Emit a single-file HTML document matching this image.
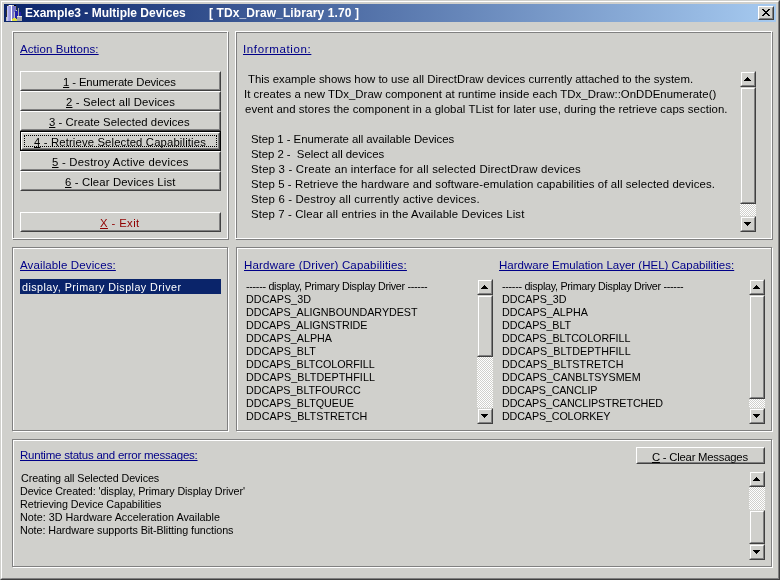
<!DOCTYPE html><html><head><meta charset="utf-8"><style>
html,body{margin:0;padding:0;}
body{will-change:transform;width:780px;height:580px;overflow:hidden;position:relative;background:#d0d0cc;font-family:"Liberation Sans",sans-serif;}
div,svg{position:absolute;box-sizing:border-box;}
.pb{border:1px solid;background:#d0d0cc;}
.in{position:absolute;left:0;top:0;right:0;bottom:0;border:1px solid;}
.btxt{font-size:11.3px;white-space:pre;line-height:20px;color:#000;}
.lbl{color:#000088;font-size:11.5px;white-space:pre;text-decoration:underline;text-decoration-skip-ink:none;line-height:14px;}
.info{font-size:11.4px;white-space:pre;line-height:15px;color:#000;}
.lst{font-size:10.75px;white-space:pre;line-height:13px;color:#000;}
u{text-decoration:underline;text-decoration-skip-ink:none;}
</style></head><body>

<div style="left:0px;top:0px;width:780px;height:580px;border-top:1px solid #d0d0cc;border-left:1px solid #d0d0cc;border-right:1px solid #404040;border-bottom:1px solid #404040"></div>
<div style="left:1px;top:1px;width:778px;height:578px;border-top:1px solid #fff;border-left:1px solid #fff;border-right:1px solid #808080;border-bottom:1px solid #808080"></div>
<div style="left:4px;top:4px;width:772px;height:18px;background:linear-gradient(to right,#0a246a,#a6caf0)"></div>
<svg style="left:6px;top:5px" width="16" height="16" shape-rendering="crispEdges"><path d="M1 0h1v1h-1zM10 1h1v1h-1zM10 2h1v1h-1zM10 3h1v1h-1zM10 4h1v1h-1zM0 5h1v1h-1zM0 6h1v1h-1zM0 7h1v1h-1zM0 8h1v1h-1zM0 9h1v1h-1zM0 10h1v1h-1zM0 11h1v1h-1z" fill="#303030"/><path d="M2 0h1v1h-1z" fill="#808080"/><path d="M3 0h3v1h-3zM5 1h1v1h-1zM5 2h1v1h-1zM5 3h1v1h-1zM5 4h1v1h-1zM5 5h1v1h-1zM5 6h1v1h-1zM5 7h1v1h-1zM5 8h1v1h-1zM5 9h1v1h-1zM5 10h1v1h-1zM5 11h1v1h-1zM5 12h1v1h-1zM5 13h1v1h-1zM5 14h1v1h-1zM5 15h1v1h-1z" fill="#ffffff"/><path d="M6 0h2v1h-2zM10 5h1v1h-1zM8 7h1v1h-1zM8 8h1v1h-1zM8 9h1v1h-1zM8 10h1v1h-1zM8 11h1v1h-1zM0 12h1v1h-1zM8 12h1v1h-1zM0 13h1v1h-1zM0 14h1v1h-1zM0 15h1v1h-1z" fill="#c0c0c0"/><path d="M8 0h2v1h-2z" fill="#000000"/><path d="M1 1h1v1h-1zM1 2h1v1h-1zM1 3h1v1h-1zM1 4h1v1h-1zM1 5h1v1h-1zM1 6h1v1h-1zM1 7h1v1h-1zM1 8h1v1h-1zM1 9h1v1h-1zM1 10h1v1h-1zM1 11h1v1h-1zM1 12h1v1h-1zM1 13h1v1h-1zM1 14h1v1h-1zM1 15h1v1h-1z" fill="#c8c8f0"/><path d="M2 1h1v1h-1zM2 2h1v1h-1zM2 3h1v1h-1zM2 4h1v1h-1zM2 5h1v1h-1zM2 6h1v1h-1zM2 7h1v1h-1zM2 8h1v1h-1zM2 9h1v1h-1zM2 10h1v1h-1zM2 11h1v1h-1zM2 12h1v1h-1zM2 13h1v1h-1zM2 14h1v1h-1zM2 15h1v1h-1z" fill="#a8a8f0"/><path d="M3 1h2v1h-2zM3 2h2v1h-2zM3 3h2v1h-2zM3 4h2v1h-2zM3 5h2v1h-2zM3 6h2v1h-2zM3 7h2v1h-2zM3 8h2v1h-2zM3 9h2v1h-2zM3 10h2v1h-2zM3 11h2v1h-2zM3 12h2v1h-2zM3 13h2v1h-2zM3 14h2v1h-2zM3 15h2v1h-2z" fill="#9c9ce0"/><path d="M6 1h4v1h-4zM6 2h4v1h-4zM6 3h4v1h-4zM6 4h4v1h-4zM6 5h4v1h-4zM6 6h3v1h-3zM6 7h2v1h-2zM6 8h2v1h-2zM6 9h2v1h-2zM6 10h2v1h-2zM6 11h2v1h-2zM6 12h2v1h-2zM6 13h1v1h-1z" fill="#7474c8"/><path d="M12 3h1v1h-1zM12 4h1v1h-1zM12 5h1v1h-1zM12 6h1v1h-1zM12 7h1v1h-1zM12 8h1v1h-1zM12 9h1v1h-1zM12 10h1v1h-1zM11 12h5v1h-5zM11 13h5v1h-5zM11 14h5v1h-5zM11 15h5v1h-5z" fill="#a8a8a8"/><path d="M9 6h3v1h-3zM9 7h3v1h-3zM13 7h2v1h-2zM9 8h3v1h-3zM13 8h2v1h-2zM9 9h3v1h-3zM13 9h2v1h-2zM9 10h3v1h-3zM13 10h2v1h-2zM9 11h2v1h-2zM9 12h2v1h-2zM10 13h1v1h-1z" fill="#2020a8"/><path d="M11 11h5v1h-5z" fill="#e0e0e0"/><path d="M7 13h3v1h-3zM6 14h5v1h-5zM6 15h5v1h-5z" fill="#e0e040"/></svg>
<div style="left:25px;top:5px;font-size:12px;font-weight:bold;color:#fff;white-space:pre;line-height:16px">Example3 - Multiple Devices</div>
<div style="left:209px;top:5px;font-size:12px;font-weight:bold;color:#fff;white-space:pre;line-height:16px;letter-spacing:0.11px">[ TDx_Draw_Library 1.70 ]</div>
<div class="pb" style="left:758px;top:6px;width:16px;height:14px;background:#d0d0cc;border-color:#fff #404040 #404040 #fff"><div class="in" style="border-color:#d0d0cc #808080 #808080 #d0d0cc"></div></div>
<svg style="left:762px;top:9px" width="8" height="7" shape-rendering="crispEdges"><path d="M0 0h1v1h-1zM1 0h1v1h-1zM6 0h1v1h-1zM7 0h1v1h-1zM1 1h1v1h-1zM2 1h1v1h-1zM5 1h1v1h-1zM6 1h1v1h-1zM2 2h1v1h-1zM3 2h1v1h-1zM4 2h1v1h-1zM5 2h1v1h-1zM3 3h1v1h-1zM4 3h1v1h-1zM2 4h1v1h-1zM3 4h1v1h-1zM4 4h1v1h-1zM5 4h1v1h-1zM1 5h1v1h-1zM2 5h1v1h-1zM5 5h1v1h-1zM6 5h1v1h-1zM0 6h1v1h-1zM1 6h1v1h-1zM6 6h1v1h-1zM7 6h1v1h-1z" fill="#000"/></svg>
<div style="left:13px;top:32px;width:216px;height:208px;border:1px solid #808080"></div>
<div style="left:12px;top:31px;width:216px;height:208px;border:1px solid #fff"></div>
<div style="left:236px;top:32px;width:537px;height:208px;border:1px solid #808080"></div>
<div style="left:235px;top:31px;width:537px;height:208px;border:1px solid #fff"></div>
<div style="left:13px;top:248px;width:216px;height:184px;border:1px solid #fff"></div>
<div style="left:12px;top:247px;width:216px;height:184px;border:1px solid #808080"></div>
<div style="left:237px;top:248px;width:536px;height:184px;border:1px solid #fff"></div>
<div style="left:236px;top:247px;width:536px;height:184px;border:1px solid #808080"></div>
<div style="left:13px;top:440px;width:760px;height:128px;border:1px solid #fff"></div>
<div style="left:12px;top:439px;width:760px;height:128px;border:1px solid #808080"></div>
<div class="pb" style="left:20px;top:71px;width:201px;height:20px;border-color:#fff #404040 #404040 #fff"><div class="in" style="border-color:#d0d0cc #808080 #808080 #d0d0cc"></div></div>
<div class="pb" style="left:20px;top:91px;width:201px;height:20px;border-color:#fff #404040 #404040 #fff"><div class="in" style="border-color:#d0d0cc #808080 #808080 #d0d0cc"></div></div>
<div class="pb" style="left:20px;top:111px;width:201px;height:20px;border-color:#fff #404040 #404040 #fff"><div class="in" style="border-color:#d0d0cc #808080 #808080 #d0d0cc"></div></div>
<div class="pb" style="left:20px;top:131px;width:201px;height:20px;border:1px solid #000"><div class="in" style="border-color:#fff #404040 #404040 #fff"><div class="in" style="border-color:#d0d0cc #808080 #808080 #d0d0cc"></div></div></div>
<div style="left:24px;top:135px;width:193px;height:12px;border:1px dotted #000"></div>
<div class="pb" style="left:20px;top:151px;width:201px;height:20px;border-color:#fff #404040 #404040 #fff"><div class="in" style="border-color:#d0d0cc #808080 #808080 #d0d0cc"></div></div>
<div class="pb" style="left:20px;top:171px;width:201px;height:20px;border-color:#fff #404040 #404040 #fff"><div class="in" style="border-color:#d0d0cc #808080 #808080 #d0d0cc"></div></div>
<div class="pb" style="left:20px;top:212px;width:201px;height:20px;border-color:#fff #404040 #404040 #fff"><div class="in" style="border-color:#d0d0cc #808080 #808080 #d0d0cc"></div></div>
<div style="left:740px;top:87px;width:16px;height:129px;background:repeating-conic-gradient(#fff 0 25%,#d0d0cc 0 50%) 0 0/2px 2px"></div>
<div class="pb" style="left:740px;top:71px;width:16px;height:16px;border-color:#d0d0cc #404040 #404040 #d0d0cc"><div class="in" style="border-color:#fff #808080 #808080 #fff"></div></div>
<svg style="left:744px;top:77px" width="7" height="4"><path d="M3 0h1v1h1v1h1v1h1v1H0V3h1V2h1V1h1z" fill="#000"/></svg>
<div class="pb" style="left:740px;top:87px;width:16px;height:117px;border-color:#d0d0cc #404040 #404040 #d0d0cc"><div class="in" style="border-color:#fff #808080 #808080 #fff"></div></div>
<div class="pb" style="left:740px;top:216px;width:16px;height:16px;border-color:#d0d0cc #404040 #404040 #d0d0cc"><div class="in" style="border-color:#fff #808080 #808080 #fff"></div></div>
<svg style="left:744px;top:222px" width="7" height="4"><path d="M0 0h7v1H6v1H5v1H4v1H3V3H2V2H1V1H0z" fill="#000"/></svg>
<div style="left:20px;top:279px;width:201px;height:15px;background:#0a246a"></div>
<div style="left:477px;top:295px;width:16px;height:113px;background:repeating-conic-gradient(#fff 0 25%,#d0d0cc 0 50%) 0 0/2px 2px"></div>
<div class="pb" style="left:477px;top:279px;width:16px;height:16px;border-color:#d0d0cc #404040 #404040 #d0d0cc"><div class="in" style="border-color:#fff #808080 #808080 #fff"></div></div>
<svg style="left:481px;top:285px" width="7" height="4"><path d="M3 0h1v1h1v1h1v1h1v1H0V3h1V2h1V1h1z" fill="#000"/></svg>
<div class="pb" style="left:477px;top:295px;width:16px;height:62px;border-color:#d0d0cc #404040 #404040 #d0d0cc"><div class="in" style="border-color:#fff #808080 #808080 #fff"></div></div>
<div class="pb" style="left:477px;top:408px;width:16px;height:16px;border-color:#d0d0cc #404040 #404040 #d0d0cc"><div class="in" style="border-color:#fff #808080 #808080 #fff"></div></div>
<svg style="left:481px;top:414px" width="7" height="4"><path d="M0 0h7v1H6v1H5v1H4v1H3V3H2V2H1V1H0z" fill="#000"/></svg>
<div style="left:749px;top:295px;width:16px;height:113px;background:repeating-conic-gradient(#fff 0 25%,#d0d0cc 0 50%) 0 0/2px 2px"></div>
<div class="pb" style="left:749px;top:279px;width:16px;height:16px;border-color:#d0d0cc #404040 #404040 #d0d0cc"><div class="in" style="border-color:#fff #808080 #808080 #fff"></div></div>
<svg style="left:753px;top:285px" width="7" height="4"><path d="M3 0h1v1h1v1h1v1h1v1H0V3h1V2h1V1h1z" fill="#000"/></svg>
<div class="pb" style="left:749px;top:295px;width:16px;height:104px;border-color:#d0d0cc #404040 #404040 #d0d0cc"><div class="in" style="border-color:#fff #808080 #808080 #fff"></div></div>
<div class="pb" style="left:749px;top:408px;width:16px;height:16px;border-color:#d0d0cc #404040 #404040 #d0d0cc"><div class="in" style="border-color:#fff #808080 #808080 #fff"></div></div>
<svg style="left:753px;top:414px" width="7" height="4"><path d="M0 0h7v1H6v1H5v1H4v1H3V3H2V2H1V1H0z" fill="#000"/></svg>
<div class="pb" style="left:636px;top:447px;width:129px;height:17px;border-color:#fff #404040 #404040 #fff"><div class="in" style="border-color:#d0d0cc #808080 #808080 #d0d0cc"></div></div>
<div style="left:749px;top:487px;width:16px;height:57px;background:repeating-conic-gradient(#fff 0 25%,#d0d0cc 0 50%) 0 0/2px 2px"></div>
<div class="pb" style="left:749px;top:471px;width:16px;height:16px;border-color:#d0d0cc #404040 #404040 #d0d0cc"><div class="in" style="border-color:#fff #808080 #808080 #fff"></div></div>
<svg style="left:753px;top:477px" width="7" height="4"><path d="M3 0h1v1h1v1h1v1h1v1H0V3h1V2h1V1h1z" fill="#000"/></svg>
<div class="pb" style="left:749px;top:510px;width:16px;height:34px;border-color:#d0d0cc #404040 #404040 #d0d0cc"><div class="in" style="border-color:#fff #808080 #808080 #fff"></div></div>
<div class="pb" style="left:749px;top:544px;width:16px;height:16px;border-color:#d0d0cc #404040 #404040 #d0d0cc"><div class="in" style="border-color:#fff #808080 #808080 #fff"></div></div>
<svg style="left:753px;top:550px" width="7" height="4"><path d="M0 0h7v1H6v1H5v1H4v1H3V3H2V2H1V1H0z" fill="#000"/></svg>
<div class="lbl" style="left:20px;top:42px;letter-spacing:0.084px;">Action Buttons:</div>
<div class="lbl" style="left:243px;top:42px;letter-spacing:0.636px;">Information:</div>
<div class="lbl" style="left:20px;top:258px;letter-spacing:0.117px;">Available Devices:</div>
<div class="lbl" style="left:244px;top:258px;letter-spacing:0.184px;">Hardware (Driver) Capabilities:</div>
<div class="lbl" style="left:499px;top:258px;letter-spacing:0.0px;">Hardware Emulation Layer (HEL) Capabilities:</div>
<div class="lbl" style="left:20px;top:448px;letter-spacing:-0.23px;">Runtime status and error messages:</div>
<div class="btxt" style="left:63px;top:72px;letter-spacing:-0.1px;"><u>1</u> - Enumerate Devices</div>
<div class="btxt" style="left:66px;top:92px;letter-spacing:0.166px;"><u>2</u> - Select all Devices</div>
<div class="btxt" style="left:49px;top:112px;letter-spacing:0.067px;"><u>3</u> - Create Selected devices</div>
<div class="btxt" style="left:34px;top:132px;letter-spacing:0.145px;"><u>4</u> - Retrieve Selected Capabilities</div>
<div class="btxt" style="left:52px;top:152px;letter-spacing:0.256px;"><u>5</u> - Destroy Active devices</div>
<div class="btxt" style="left:65px;top:172px;letter-spacing:0.143px;"><u>6</u> - Clear Devices List</div>
<div class="btxt" style="left:100px;top:213px;letter-spacing:0.398px;color:#900000;"><u>X</u> - Exit</div>
<div class="btxt" style="left:652px;top:447px;letter-spacing:-0.222px;"><u>C</u> - Clear Messages</div>
<div class="info" style="left:248px;top:72px;letter-spacing:0.0px;">This example shows how to use all DirectDraw devices currently attached to the system.</div>
<div class="info" style="left:244px;top:87px;letter-spacing:0.036px;">It creates a new TDx_Draw component at runtime inside each TDx_Draw::OnDDEnumerate()</div>
<div class="info" style="left:245px;top:102px;letter-spacing:0.062px;">event and stores the component in a global TList for later use, during the retrieve caps section.</div>
<div class="info" style="left:251px;top:132px;letter-spacing:-0.051px;">Step 1 - Enumerate all available Devices</div>
<div class="info" style="left:251px;top:147px;letter-spacing:-0.037px;">Step 2 -  Select all devices</div>
<div class="info" style="left:251px;top:162px;letter-spacing:0.19px;">Step 3 - Create an interface for all selected DirectDraw devices</div>
<div class="info" style="left:251px;top:177px;letter-spacing:0.111px;">Step 5 - Retrieve the hardware and software-emulation capabilities of all selected devices.</div>
<div class="info" style="left:251px;top:192px;letter-spacing:0.156px;">Step 6 - Destroy all currently active devices.</div>
<div class="info" style="left:251px;top:207px;letter-spacing:0.127px;">Step 7 - Clear all entries in the Available Devices List</div>
<div class="lst" style="left:22px;top:281px;letter-spacing:0.448px;color:#fff">display, Primary Display Driver</div>
<div class="lst" style="left:246px;top:280px;letter-spacing:-0.295px;">------ display, Primary Display Driver ------</div>
<div class="lst" style="left:246px;top:293px;letter-spacing:0.05px;">DDCAPS_3D</div>
<div class="lst" style="left:246px;top:306px;letter-spacing:-0.038px;">DDCAPS_ALIGNBOUNDARYDEST</div>
<div class="lst" style="left:246px;top:319px;letter-spacing:-0.058px;">DDCAPS_ALIGNSTRIDE</div>
<div class="lst" style="left:246px;top:332px;letter-spacing:0.0px;">DDCAPS_ALPHA</div>
<div class="lst" style="left:246px;top:345px;letter-spacing:-0.0px;">DDCAPS_BLT</div>
<div class="lst" style="left:246px;top:358px;letter-spacing:-0.04px;">DDCAPS_BLTCOLORFILL</div>
<div class="lst" style="left:246px;top:371px;letter-spacing:0.071px;">DDCAPS_BLTDEPTHFILL</div>
<div class="lst" style="left:246px;top:384px;letter-spacing:-0.066px;">DDCAPS_BLTFOURCC</div>
<div class="lst" style="left:246px;top:397px;letter-spacing:-0.0px;">DDCAPS_BLTQUEUE</div>
<div class="lst" style="left:246px;top:410px;letter-spacing:0.052px;">DDCAPS_BLTSTRETCH</div>
<div class="lst" style="left:502px;top:280px;letter-spacing:-0.295px;">------ display, Primary Display Driver ------</div>
<div class="lst" style="left:502px;top:293px;letter-spacing:0.0px;">DDCAPS_3D</div>
<div class="lst" style="left:502px;top:306px;letter-spacing:-0.017px;">DDCAPS_ALPHA</div>
<div class="lst" style="left:502px;top:319px;letter-spacing:-0.069px;">DDCAPS_BLT</div>
<div class="lst" style="left:502px;top:332px;letter-spacing:-0.056px;">DDCAPS_BLTCOLORFILL</div>
<div class="lst" style="left:502px;top:345px;letter-spacing:0.055px;">DDCAPS_BLTDEPTHFILL</div>
<div class="lst" style="left:502px;top:358px;letter-spacing:0.062px;">DDCAPS_BLTSTRETCH</div>
<div class="lst" style="left:502px;top:371px;letter-spacing:-0.016px;">DDCAPS_CANBLTSYSMEM</div>
<div class="lst" style="left:502px;top:384px;letter-spacing:-0.153px;">DDCAPS_CANCLIP</div>
<div class="lst" style="left:502px;top:397px;letter-spacing:-0.091px;">DDCAPS_CANCLIPSTRETCHED</div>
<div class="lst" style="left:502px;top:410px;letter-spacing:-0.143px;">DDCAPS_COLORKEY</div>
<div class="lst" style="left:21px;top:472px;letter-spacing:-0.079px;">Creating all Selected Devices</div>
<div class="lst" style="left:20px;top:485px;letter-spacing:-0.099px;">Device Created: 'display, Primary Display Driver'</div>
<div class="lst" style="left:20px;top:498px;letter-spacing:-0.048px;">Retrieving Device Capabilities</div>
<div class="lst" style="left:20px;top:511px;letter-spacing:0.015px;">Note: 3D Hardware Acceleration Available</div>
<div class="lst" style="left:20px;top:524px;letter-spacing:-0.077px;">Note: Hardware supports Bit-Blitting functions</div>
</body></html>
